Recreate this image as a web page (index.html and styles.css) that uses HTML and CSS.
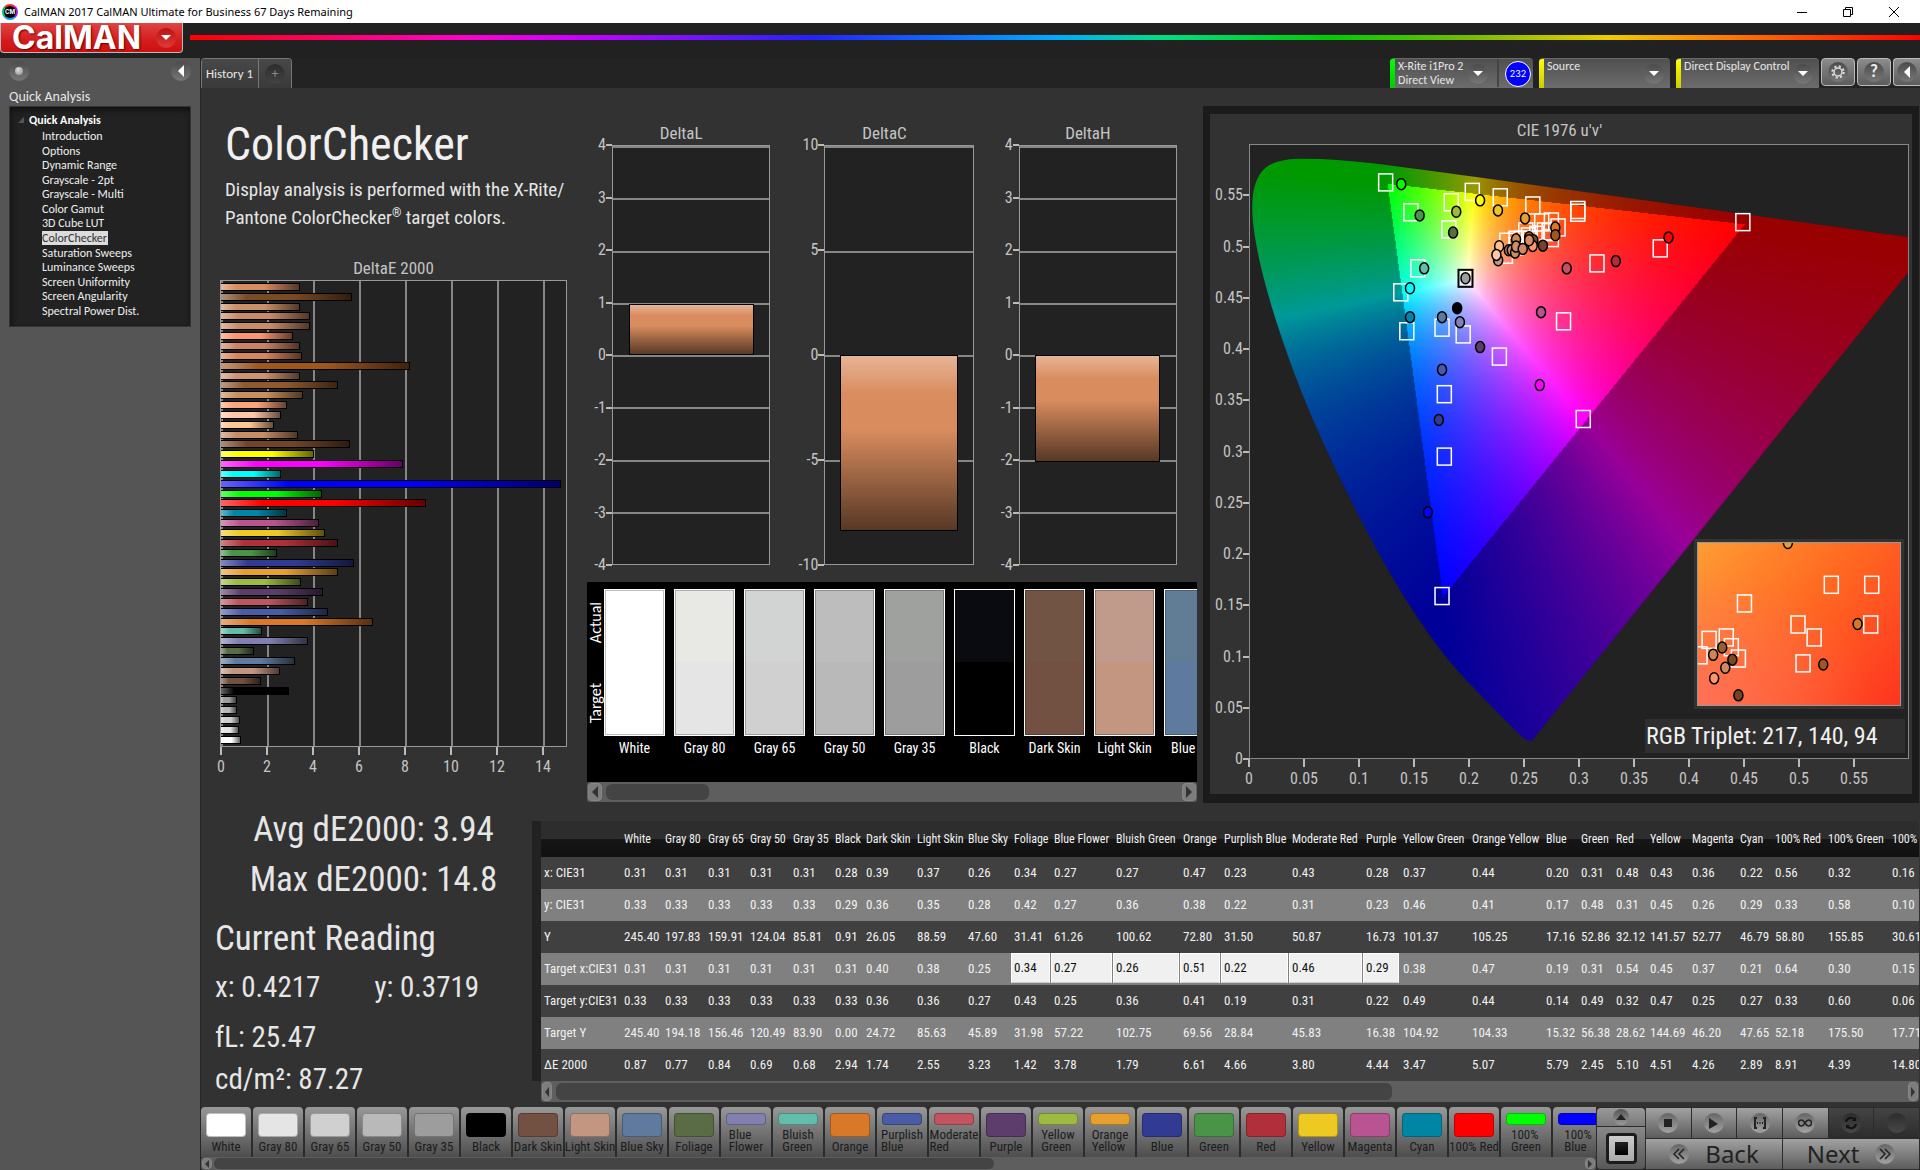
FILE: index.html
```html
<!DOCTYPE html>
<html lang="en">
<head>
<meta charset="utf-8">
<title>CalMAN 2017 CalMAN Ultimate for Business 67 Days Remaining</title>
<link rel="stylesheet" href="styles.css">
</head>
<body>
<header class="titlebar">
  <span class="app-icon">CM</span>
  <span class="app-title">CalMAN 2017 CalMAN Ultimate for Business 67 Days Remaining</span>
  <div class="window-buttons">
    <button aria-label="Minimize"><svg width="12" height="12"><path d="M1 6.5h10" stroke="#000"/></svg></button>
    <button aria-label="Restore"><svg width="12" height="12" fill="none" stroke="#000"><path d="M1.5 3.5h7v7h-7zM3.500 3.500v-2h7v7h-2"/></svg></button>
    <button aria-label="Close"><svg width="12" height="12" stroke="#000"><path d="M1 1l10 10M11 1L1 11"/></svg></button>
  </div>
</header>
<div class="brandbar">
  <button class="logo"><span>CalMAN</span><i class="round round-red"><svg width="10" height="6"><path d="M0 0h10L5 5z" fill="#fff"/></svg></i></button>
  <div class="rainbow"></div>
</div>
<div class="body">
  <aside class="sidebar">
    <div class="side-tools">
      <button class="round" aria-label="Status"><i class="bead"></i></button>
      <button class="round" aria-label="Collapse"><svg width="6" height="12"><path d="M6 0v12L0 6z" fill="#fff"/></svg></button>
    </div>
    <h2>Quick Analysis</h2>
    <nav class="tree">
      <strong><svg width="6" height="6"><path d="M6 0v6H0z" fill="#555"/></svg>Quick Analysis</strong>
      <ul id="tree"></ul>
    </nav>
  </aside>
  <main>
    <div class="toolbar">
      <div class="tabs">
        <button class="tab">History 1</button>
        <button class="tab add" aria-label="Add tab"><i class="round dark">+</i></button>
      </div>
      <div class="devices">
        <button class="device meter"><i class="stripe green"></i><span>X-Rite i1Pro 2<br>Direct View</span><i class="round arrow"><svg width="10" height="6"><path d="M0 0h10L5 5z" fill="#fff"/></svg></i><i class="divider"></i><b class="count">232</b></button>
        <button class="device source"><i class="stripe"></i><span>Source</span><i class="round arrow"><svg width="10" height="6"><path d="M0 0h10L5 5z" fill="#fff"/></svg></i></button>
        <button class="device display"><i class="stripe"></i><span>Direct Display Control</span><i class="round arrow"><svg width="10" height="6"><path d="M0 0h10L5 5z" fill="#fff"/></svg></i></button>
        <div class="tools">
          <button class="tool" aria-label="Settings"><i class="round"><svg width="14" height="14" viewBox="-7 -7 14 14" fill="none" stroke="#ddd"><circle r="4" stroke-width="1.500"/><circle r="5.700" stroke-width="2" stroke-dasharray="2.200 2.280"/></svg></i></button>
          <button class="tool" aria-label="Help"><i class="round q">?</i></button>
          <button class="tool" aria-label="Collapse"><i class="round"><svg width="6" height="12"><path d="M6 0v12L0 6z" fill="#fff"/></svg></i></button>
        </div>
      </div>
    </div>

    <div class="upper">
      <section class="intro">
        <h1>ColorChecker</h1>
        <p>Display analysis is performed with the X-Rite/<br>Pantone ColorChecker<sup>®</sup> target colors.</p>
        <h3>DeltaE 2000</h3>
        <div class="de-plot" id="de-plot"></div>
        <div class="de-axis"><span>0</span><span>2</span><span>4</span><span>6</span><span>8</span><span>10</span><span>12</span><span>14</span></div>
      </section>

      <section class="middle">
        <div class="deltas" id="deltas"></div>
        <div class="patches">
          <div class="patch-view">
            <div class="patch-side"><span>Actual</span><span>Target</span></div>
            <div class="patch-row" id="patches"></div>
          </div>
          <div class="scroll"><button aria-label="Left"><svg width="6" height="12"><path d="M6 0v12L0 6z"/></svg></button><div class="track"><i style="width:18%"></i></div><button aria-label="Right"><svg width="6" height="12"><path d="M0 0v12l6-6z"/></svg></button></div>
        </div>
      </section>

      <section class="cie">
        <div class="cie-panel">
          <h3>CIE 1976 u'v'</h3>
          <div class="cie-y" id="cie-y"></div>
          <div class="cie-plot">
            <canvas id="gamut" width="659" height="614"></canvas>
            <svg class="markers" id="markers"></svg>
            <div class="inset"><svg id="inset"></svg></div>
            <div class="triplet">RGB Triplet: 217, 140, 94</div>
          </div>
          <div class="cie-x" id="cie-x"></div>
        </div>
      </section>
    </div>

    <div class="lower">
      <section class="stats">
        <p class="big">Avg dE2000: 3.94</p>
        <p class="big">Max dE2000: 14.8</p>
        <h3>Current Reading</h3>
        <p class="pair"><span>x: 0.4217</span><span>y: 0.3719</span></p>
        <p class="row-fl">fL: 25.47</p>
        <p>cd/m²: 87.27</p>
      </section>
      <section class="data">
        <div class="table-wrap"><table id="table"></table></div>
        <div class="scroll tight"><button aria-label="Left"><svg width="4" height="10"><path d="M4 0v10L0 5z"/></svg></button><div class="track"><i style="width:62%"></i></div><button aria-label="Right"><svg width="4" height="10"><path d="M0 0v10l4-5z"/></svg></button></div>
      </section>
    </div>

    <footer>
      <div class="swatches">
        <div class="swatch-row" id="swatches"></div>
        <div class="scroll thin"><button aria-label="Left"><svg width="4" height="8"><path d="M4 0v8L0 4z"/></svg></button><div class="track"><i style="width:57%"></i></div><button aria-label="Right"><svg width="4" height="8"><path d="M0 0v8l4-4z"/></svg></button></div>
      </div>
      <div class="stopper">
        <button class="up" aria-label="Expand"><i class="round"><svg width="10" height="6"><path d="M0 6h10L5 0z" fill="#222"/></svg></i></button>
        <button class="stop" aria-label="Pattern"><i></i></button>
      </div>
      <div class="transport">
        <button aria-label="Stop"><i class="round"><svg width="8" height="8"><path d="M0 0h8v8H0z" fill="#222"/></svg></i></button>
        <button aria-label="Play"><i class="round"><svg width="9" height="11"><path d="M0 0v11l9-5z" fill="#222"/></svg></i></button>
        <button aria-label="Read series"><i class="round"><svg width="14" height="12" fill="none" stroke="#222" stroke-width="2"><path d="M4 1H2v10h2M10 1h2v10h-2"/><path d="M4 6h1M6.500 6h1M9 6h1"/></svg></i></button>
        <button aria-label="Continuous"><i class="round"><svg width="14" height="8" fill="none" stroke="#222" stroke-width="1.500"><path d="M7 4C5.500 1.500 4.500 1 3.500 1a3 3 0 0 0 0 6C4.500 7 5.500 6.500 7 4s2.500-3 3.500-3a3 3 0 0 1 0 6C9.500 7 8.500 6.500 7 4z"/></svg></i></button>
        <button class="off" aria-label="Refresh"><i class="round"><svg width="14" height="14" fill="none" stroke="#111" stroke-width="2"><path d="M2 6a5 5 0 0 1 9-2M12 8a5 5 0 0 1-9 2"/><path d="M12 1v4H8zM2 13V9h4z" fill="#111" stroke="none"/></svg></i></button>
        <button class="off" aria-label="Record"><i class="round"></i></button>
        <button class="nav back"><i class="round"><svg width="12" height="12" fill="none" stroke="#222" stroke-width="1.500"><path d="M6 1L1 6l5 5M11 1L6 6l5 5"/></svg></i>Back</button>
        <button class="nav next">Next<i class="round"><svg width="12" height="12" fill="none" stroke="#222" stroke-width="1.500"><path d="M6 1l5 5-5 5M1 1l5 5-5 5"/></svg></i></button>
      </div>
    </footer>
  </main>
</div>
<script src="app.js"></script>
</body>
</html>
```
FILE: styles.css
```css
:root {
  --ui: Carlito, Lato, sans-serif;
  --narrow: "Roboto Condensed", Carlito, Lato, sans-serif;
}
* { box-sizing: border-box; }
body {
  margin: 0; min-height: 100vh; display: flex; flex-direction: column;
  background: #222; color: #e6e6e6; font: 12px/14px var(--ui); overflow-x: hidden;
}
h1, h2, h3, p, ul { margin: 0; padding: 0; font-weight: 400; }
ul { list-style: none; }
button { border: 0; padding: 0; margin: 0; background: none; color: inherit; font: inherit; }
i { font-style: normal; }
svg { display: block; }

/* window title */
.titlebar { display: flex; align-items: center; height: 23px; background: #fff; color: #000; font: 11px/16px "Noto Sans", sans-serif; }
.app-icon {
  width: 16px; height: 16px; margin: 0 6px 0 2px; border-radius: 50%;
  border: 2px solid #0a8; border-color: #e33 #92e #19e #1b5;
  background: #000; color: #fff; font: 700 6px/12px Inter, sans-serif; text-align: center;
}
.window-buttons { margin-left: auto; display: flex; }
.window-buttons button { width: 46px; height: 22px; display: grid; place-items: center; }
.window-buttons button:last-child { width: 49px; padding-right: 3px; }

.brandbar { display: flex; align-items: flex-start; height: 35px; background: #212121; }
.logo {
  flex: none; width: 183px; height: 30px; padding: 0 6px 0 11px; display: flex; align-items: center; justify-content: space-between;
  border: 1px solid #bbb; border-top: 0; border-radius: 0 0 4px 4px;
  background: linear-gradient(#e04545, #d51c1c 60%, #cc1010); color: #fff;
  font: 700 32px/29px Inter, sans-serif; text-shadow: 1px 1px 2px #600;
}
.rainbow { flex: 1; height: 5px; margin: 12px 0 0 7px; background: linear-gradient(to right, #f00, #f0c 16%, #c0f 22%, #22f 36%, #0af 50%, #0d8 56%, #0c0 66%, #7b0 74%, #ec0 82%, #f70 89%, #f00); }

.round {
  flex: none; width: 20px; height: 20px; border-radius: 50%; display: inline-grid; place-items: center;
  background: linear-gradient(#4b4b4b, #777);
}
.round-red { background: linear-gradient(#b81313, #e03a3a); }

.body { flex: 1; display: flex; }
.sidebar { flex: none; width: 200px; padding: 3px 9px 0; background: #555; }
.side-tools { display: flex; justify-content: space-between; }
.bead { width: 8px; height: 8px; border-radius: 50%; background: radial-gradient(at 40% 30%, #ddd, #888); }
.sidebar h2 { margin-top: 7px; font-size: 14px; line-height: 18px; }
.tree { height: 221px; padding: 6px 0 6px 20px; background: #222; border: 1px solid #333; box-shadow: inset 1px 3px 6px #111; }
.tree strong { display: flex; align-items: center; gap: 5px; margin-left: -12px; line-height: 14px; color: #fff; }
.tree ul { height: 189px; margin-top: 2px; padding-left: 12px; display: flex; flex-direction: column; justify-content: space-between; align-items: flex-start; }
.tree a { color: #eee; text-decoration: none; display: block; line-height: 14px; padding: 0 1px 0 0; }
.tree a.on { background: #dcdcdc; color: #333; }

main { flex: 1; min-width: 0; display: flex; flex-direction: column; border-left: 1px solid #262626; background: #323232; }
.toolbar { display: flex; justify-content: space-between; height: 30px; background: #232323; }
.tabs { display: flex; border: 1px solid #777; border-bottom: 0; border-radius: 4px 4px 0 0; overflow: hidden; }
.tab { padding: 0 5px 0 4px; width: 57px; background: linear-gradient(#484848, #3a3a3a); font-size: 13px; border-right: 1px solid #777; white-space: nowrap; }
.tab.add { width: 32px; padding: 0; border: 0; }
.round.dark { background: linear-gradient(#2c2c2c, #444); color: #888; font-size: 14px; }
.devices { display: flex; gap: 6px; align-items: flex-start; }
.device {
  display: flex; align-items: flex-start; height: 30px; text-align: left;
  border-radius: 4px 4px 0 0; border-top: 1px solid #6a6a6a; background: linear-gradient(#505050, #6c6c6c);
}
.device.meter { width: 143px; }
.device.source { width: 131px; }
.device.display { width: 143px; }
.device span { flex: 1; white-space: nowrap; padding-left: 3px; }
.stripe { width: 5px; height: 29px; background: linear-gradient(#ff0, #cc0); border-radius: 3px 0 0 0; }
.stripe.green { background: linear-gradient(#0f0, #0c0); }
.arrow { margin: 5px 6px 0 0; }
.divider { width: 2px; height: 28px; background: #444; margin: 0 6px 0 3px; }
.count { width: 26px; height: 26px; margin: 2px 2px 0 0; border-radius: 50%; border: 1px solid #fff; background: #00f; color: #fff; font: 9px/24px Inter, sans-serif; text-align: center; }
.tools { display: flex; gap: 2px; margin-left: -4px; }
.tool { width: 34px; height: 28px; border: 1px solid #bbb; border-radius: 4px; background: linear-gradient(#8c8c8c, #5c5c5c); display: grid; place-items: center; }
.tool:last-child { width: 27px; border-right: 0; border-radius: 4px 0 0 4px; }
.round.q { font: 700 17px/20px var(--ui); color: #eee; }

/* charts */
.upper { flex: 1 0 715px; display: grid; grid-template-columns: minmax(0, 386fr) minmax(0, 610fr) minmax(0, 723fr); font-family: var(--narrow); }
.upper h3 { font-size: 17px; line-height: 22px; text-align: center; color: #c4c4c4; }
.intro { display: flex; flex-direction: column; padding: 28px 20px 26px 19px; }
.intro h1 { font-size: 46px; line-height: 56px; color: #f0f0f0; padding-left: 5px; }
.intro p { font-size: 19px; line-height: 28px; padding: 4px 0 24px 5px; white-space: nowrap; }
.intro sup { font-size: 12px; line-height: 0; }
.intro p + h3 { line-height: 24px; }
.de-plot {
  flex: 1; display: flex; flex-direction: column; border: 1px solid #999; padding: 1px 0;
  background: repeating-linear-gradient(to right, #868686 0 2px, transparent 2px 13.333%) #222;
}
.de-row { flex: 1; display: flex; align-items: center; }
.bar { height: 8px; border: 1px solid #000; border-left: 0; background-image: linear-gradient(to right, rgba(255,255,255,.4), transparent 20%, transparent 55%, rgba(0,0,0,.6)); }
.de-axis { display: grid; grid-template-columns: repeat(7, 2fr) 1fr; padding: 0 1px; font-size: 16px; line-height: 20px; color: #c4c4c4; }
.de-axis span, .cie-x span { width: 0; display: flex; flex-direction: column; align-items: center; }
.de-axis span::before, .cie-x span::before { content: ""; width: 2px; height: 8px; margin-bottom: 2px; background: #bbb; }

.middle { display: flex; flex-direction: column; }
.deltas { flex: 1; display: grid; grid-template-columns: repeat(3, 1fr); padding: 34px 0 17px; }
.delta { display: grid; grid-template: 23px 1fr / auto 1fr; padding: 0 20px 0 5px; }
.delta h3 { grid-column: 1 / 3; }
.delta-axis { width: 20px; display: flex; flex-direction: column; justify-content: space-between; font-size: 16px; color: #c4c4c4; }
.delta-axis.wide { width: 29px; }
.delta-axis span, .cie-y span { height: 0; display: flex; align-items: center; justify-content: flex-end; white-space: nowrap; }
.delta-axis span::after, .cie-y span::after { content: ""; width: 6px; height: 2px; flex: none; background: #bbb; }
.delta-plot { position: relative; border: 1px solid #999; background-color: #222; }
.delta-plot .block { position: absolute; left: 10%; right: 10%; border: 1px solid #000; background: linear-gradient(rgba(255,255,255,.35), transparent 22%, transparent 42%, rgba(0,0,0,.6)) #d98c5e; }
.eighths { background-image: repeating-linear-gradient(#868686 0 2px, transparent 2px 12.5%); }
.quarters { background-image: repeating-linear-gradient(#868686 0 2px, transparent 2px 25%); }

.patches { margin-bottom: 1px; }
.patch-view { display: flex; height: 200px; background: #000; overflow: hidden; }
.patch-side { flex: none; width: 17px; height: 161px; display: flex; flex-direction: column; justify-content: space-around; align-items: center; color: #fff; font: 16px/17px var(--ui); }
.patch-side span { writing-mode: vertical-rl; rotate: 180deg; }
.patch-row { display: flex; gap: 9px; padding-top: 7px; min-width: 0; }
.patch { flex: none; width: 61px; text-align: center; font-size: 14px; line-height: 24px; color: #fff; white-space: nowrap; }
.patch div { height: 147px; border: 1px solid #fff; outline: 1px solid rgba(0,0,0,.25); outline-offset: -2px; }
.scroll { display: flex; align-items: center; height: 20px; padding: 1px; background: #5e5e5e; border-radius: 3px; }
.scroll button { flex: none; width: 14px; height: 100%; display: grid; place-items: center; border: 1px solid #888; border-radius: 4px; background: #7c7c7c; }
.scroll button svg { fill: #333; }
.track { flex: 1; height: 100%; padding: 1px 4px; }
.track i { display: block; height: 100%; border-radius: 6px; background: #444; }
.scroll.tight { height: 21px; margin-left: 9px; }
.scroll.tight button, .scroll.thin button { width: 10px; }
.scroll.thin { height: 13px; }
.scroll.thin .track { padding: 0 2px; }

.cie { padding: 18px 1px 0 6px; display: flex; }
.cie-panel { flex: 1; min-width: 0; display: grid; grid-template: 30px 1fr 35px / 39px 1fr; padding-right: 3px; border: 7px solid #1b1b1b; border-top-width: 8px; border-bottom-width: 9px; }
.cie-panel h3 { grid-column: 1 / 3; line-height: 32px; }
.cie-y { display: grid; grid-template-rows: repeat(12, 1fr); align-items: end; font-size: 16px; color: #c4c4c4; }
.cie-plot { position: relative; border: 1px solid #888; background: #222; }
.cie-plot canvas, .markers { position: absolute; inset: 0; width: 100%; height: 100%; }
.markers, .inset svg { overflow: hidden; }
.cie-x { grid-column: 2; display: grid; grid-template-columns: repeat(12, 1fr); font-size: 16px; line-height: 20px; color: #c4c4c4; }
.target { fill: none; stroke: #fff; stroke-width: 1.5; }
.target.now { stroke: #000; stroke-width: 2; }
.reading { stroke: #000; stroke-width: 1.5; }
.inset { position: absolute; right: 4px; bottom: 49px; width: 210px; height: 170px; padding: 3px; background: #333; }
.inset svg { width: 100%; height: 100%; border: 1px solid #999; background: radial-gradient(at 0 100%, rgba(255,112,100,.8), transparent 60%), linear-gradient(130deg, #ff9c34, #ff6c22 45%, #ff3420); }
.triplet { position: absolute; right: 3px; bottom: 5px; width: 260px; padding-left: 1px; background: #2f2f2f; font-size: 24px; line-height: 34px; color: #f0f0f0; }

.lower { display: grid; grid-template-columns: 331px minmax(0, 1fr); padding: 18px 1px 5px 0; }
.stats { padding: 0 0 0 14px; height: 281px; font: 29px/36px var(--narrow); white-space: nowrap; }
.stats .big { font-size: 35px; line-height: 50px; text-align: center; }
.stats .big:first-child { margin-top: -16px; }
.stats h3 { font-size: 35px; line-height: 40px; margin-top: 14px; }
.stats .pair { display: flex; gap: 54px; margin-top: 10px; }
.stats .row-fl { margin: 14px 0 6px; }
.table-wrap { overflow: hidden; border-left: 9px solid #222; }
table { width: 1410px; table-layout: fixed; border-collapse: collapse; font: 13px/16px var(--narrow); }
th, td { height: 32px; padding: 0 3px; text-align: left; font-weight: 400; white-space: nowrap; color: #f0f0f0; }
thead th { height: 36px; font-size: 12px; background: linear-gradient(#2d2d2d 50%, #161616 51%, #101010); }
tbody tr { background: #404040; }
tbody tr:nth-child(even) { background: #808080; }
td.hot { padding: 0 1px 2px 0; }
td.hot span { display: block; height: 30px; padding: 6px 2px 0; background: #f0f0f0; border: 1px solid #fff; border-bottom-color: #ccc; color: #111; }

/* pattern swatches and transport */
footer { display: flex; gap: 1px; height: 63px; background: #2c2c2c; }
.swatches { flex: 1; min-width: 0; }
.swatch-row { display: flex; gap: 2px; height: 50px; overflow: hidden; }
.swatch { flex: none; width: 50px; height: 50px; padding-top: 6px; display: flex; flex-direction: column; align-items: center; border-radius: 4px 4px 0 0; background: linear-gradient(#989898, #4e4e4e); color: #1c1c1c; font: 13px/12px var(--narrow); white-space: nowrap; text-align: left; }
.swatch i { width: 40px; height: 24px; margin-bottom: 4px; border-radius: 4px; border: 1px solid rgba(0,0,0,.25); }
.swatch.two i { height: 12px; }
.stopper { flex: none; width: 48px; display: flex; flex-direction: column; gap: 1px; padding: 1px 0; }
.stopper button { width: 48px; display: grid; place-items: center; background: linear-gradient(#999, #7a7a7a); border-radius: 4px 4px 0 0; }
.up { height: 18px; }
.up .round { width: 16px; height: 16px; background: linear-gradient(#555, #999); }
.stop { flex: 1; }
.stopper .stop { background: linear-gradient(#888, #585858); border-radius: 0 0 4px 4px; }
.stop i { width: 31px; height: 31px; border: 3px solid #1c1c1c; border-radius: 4px; background: linear-gradient(#222, #000) center / 13px 13px no-repeat, linear-gradient(#ccc, #aaa); }
.transport { flex: none; width: 274px; padding: 1px 1px 1px 0; display: grid; grid-template: 30px 30px / repeat(6, 1fr); gap: 1px; }
.transport button { display: flex; align-items: center; justify-content: center; background: linear-gradient(#a2a2a2, #5c5c5c); }
.transport .round { background: linear-gradient(#666, #a2a2a2); }
.transport .off { background: linear-gradient(#444, #2c2c2c); }
.transport .off .round { background: linear-gradient(#2c2c2c, #484848); }
.transport .nav { grid-column: span 3; gap: 16px; color: #222; font: 24px/28px "Noto Sans", sans-serif; }
```
FILE: app.js
```js
const el = (tag, cls, text) => {
  const n = document.createElement(tag);
  if (cls) n.className = cls;
  if (text !== undefined) n.textContent = text;
  return n;
};
const svg = (tag, attrs) => {
  const n = document.createElementNS('http://www.w3.org/2000/svg', tag);
  for (const k in attrs) n.setAttribute(k, attrs[k]);
  return n;
};
const $ = id => document.getElementById(id);

// workflow pages
for (const name of ['Introduction', 'Options', 'Dynamic Range', 'Grayscale - 2pt', 'Grayscale - Multi', 'Color Gamut', '3D Cube LUT', 'ColorChecker', 'Saturation Sweeps', 'Luminance Sweeps', 'Screen Uniformity', 'Screen Angularity', 'Spectral Power Dist.']) {
  const li = el('li'), a = el('a', name === 'ColorChecker' ? 'on' : '', name);
  a.href = '#';
  li.append(a);
  $('tree').append(li);
}

// name, colour, column width, x, y, Y, target x, target y, target Y, dE2000
const colors = [
  ['White', '#ffffff', 41, '0.31', '0.33', '245.40', '0.31', '0.33', '245.40', '0.87'],
  ['Gray 80', '#e5e5e5', 43, '0.31', '0.33', '197.83', '0.31', '0.33', '194.18', '0.77'],
  ['Gray 65', '#d0d0d0', 42, '0.31', '0.33', '159.91', '0.31', '0.33', '156.46', '0.84'],
  ['Gray 50', '#b9b9b9', 43, '0.31', '0.33', '124.04', '0.31', '0.33', '120.49', '0.69'],
  ['Gray 35', '#9d9d9d', 42, '0.31', '0.33', '85.81', '0.31', '0.33', '83.90', '0.68'],
  ['Black', '#000000', 31, '0.28', '0.29', '0.91', '0.31', '0.33', '0.00', '2.94'],
  ['Dark Skin', '#735142', 51, '0.39', '0.36', '26.05', '0.40', '0.36', '24.72', '1.74'],
  ['Light Skin', '#c39682', 51, '0.37', '0.35', '88.59', '0.38', '0.36', '85.63', '2.55'],
  ['Blue Sky', '#5e7a9e', 46, '0.26', '0.28', '47.60', '0.25', '0.27', '45.89', '3.23'],
  ['Foliage', '#596c43', 40, '0.34', '0.42', '31.41', '0.34', '0.43', '31.98', '1.42'],
  ['Blue Flower', '#8280b0', 62, '0.27', '0.27', '61.26', '0.27', '0.25', '57.22', '3.78'],
  ['Bluish Green', '#64bdaa', 67, '0.27', '0.36', '100.62', '0.26', '0.36', '102.75', '1.79'],
  ['Orange', '#d97829', 41, '0.47', '0.38', '72.80', '0.51', '0.41', '69.56', '6.61'],
  ['Purplish Blue', '#4a5ca5', 68, '0.23', '0.22', '31.50', '0.22', '0.19', '28.84', '4.66'],
  ['Moderate Red', '#c25460', 74, '0.43', '0.31', '50.87', '0.46', '0.31', '45.83', '3.80'],
  ['Purple', '#5d3d6b', 37, '0.28', '0.23', '16.73', '0.29', '0.22', '16.38', '4.44'],
  ['Yellow Green', '#9eba41', 69, '0.37', '0.46', '101.37', '0.38', '0.49', '104.92', '3.47'],
  ['Orange Yellow', '#e6a02e', 74, '0.44', '0.41', '105.25', '0.47', '0.44', '104.33', '5.07'],
  ['Blue', '#323b94', 35, '0.20', '0.17', '17.16', '0.19', '0.14', '15.32', '5.79'],
  ['Green', '#4a9448', 35, '0.31', '0.48', '52.86', '0.31', '0.49', '56.38', '2.45'],
  ['Red', '#b02f38', 34, '0.48', '0.31', '32.12', '0.54', '0.32', '28.62', '5.10'],
  ['Yellow', '#edc922', 42, '0.43', '0.45', '141.57', '0.45', '0.47', '144.69', '4.51'],
  ['Magenta', '#ba5391', 48, '0.36', '0.26', '52.77', '0.37', '0.25', '46.20', '4.26'],
  ['Cyan', '#0086a5', 35, '0.22', '0.29', '46.79', '0.21', '0.27', '47.65', '2.89'],
  ['100% Red', '#ff0000', 53, '0.56', '0.33', '58.80', '0.64', '0.33', '52.18', '8.91'],
  ['100% Green', '#00ff00', 64, '0.32', '0.58', '155.85', '0.30', '0.60', '175.50', '4.39'],
  ['100% Blue', '#0000ff', 72, '0.16', '0.10', '30.61', '0.15', '0.06', '17.71', '14.80'],
];

// dE2000 bars, drawn from the last measured colour down to white
const extra = [[2.6, '#00ffff'], [7.9, '#ff00ff'], [4.05, '#ffff00'], [5.6, '#734528'], [3.35, '#c98d66'], [2.3, '#ffc690'], [2.6, '#ffc7a8'], [2.85, '#ffa57a'], [3.55, '#c88f5c'], [5.1, '#8f5a30'], [3.45, '#cf9272'], [8.2, '#a0561f'], [3.5, '#d8845c'], [3.45, '#cd8266'], [3.15, '#ff966f'], [3.85, '#c98c66'], [3.85, '#c98a68'], [3.45, '#cc9068'], [5.7, '#7a4a24'], [3.45, '#d98c5e']];
const bars = colors.map(c => [+c[9], c[1]]).concat(extra).reverse();
for (const [value, color] of bars) {
  const row = el('div', 'de-row'), bar = el('div', 'bar');
  bar.style.width = value / 15 * 100 + '%';
  bar.style.backgroundColor = color;
  row.append(bar);
  $('de-plot').append(row);
}

// DeltaL / DeltaC / DeltaH
for (const [name, max, step, value] of [['DeltaL', 4, 1, .97], ['DeltaC', 10, 5, -8.4], ['DeltaH', 4, 1, -2.04]]) {
  const box = el('div', 'delta'), axis = el('div', 'delta-axis' + (max === 10 ? ' wide' : ''));
  for (let v = max; v >= -max; v -= step) axis.append(el('span', '', v));
  const plot = el('div', 'delta-plot ' + (step === 1 ? 'eighths' : 'quarters')), block = el('div', 'block');
  block.style.top = (max - Math.max(value, 0)) / max * 50 + '%';
  block.style.height = Math.abs(value) / max * 50 + '%';
  plot.append(block);
  box.append(el('h3', '', name), axis, plot);
  $('deltas').append(box);
}

// actual / target patches
const actual = ['#ffffff', '#e8e8e5', '#d1d4d2', '#bdbdbd', '#9fa19f', '#0a0b10', '#725445', '#c09a8b', '#617d96'];
actual.forEach((color, i) => {
  const p = el('div', 'patch'), d = el('div');
  d.style.background = `linear-gradient(${color} 50%, ${colors[i][1]} 50%)`;
  p.append(d, colors[i][0]);
  $('patches').append(p);
});

// results table
const group = el('colgroup'), label = el('col');
label.style.width = '80px';
group.append(label);
const head = el('tr');
head.append(el('th', '', ''));
for (const c of colors) {
  const col = el('col'), th = el('th', '', c[0]);
  col.style.width = c[2] + 'px';
  group.append(col);
  th.scope = 'col';
  head.append(th);
}
const thead = el('thead'), tbody = el('tbody');
thead.append(head);
['x: CIE31', 'y: CIE31', 'Y', 'Target x:CIE31', 'Target y:CIE31', 'Target Y', 'ΔE 2000'].forEach((name, r) => {
  const tr = el('tr'), th = el('th', '', name);
  th.scope = 'row';
  tr.append(th);
  colors.forEach((c, i) => {
    const hot = r === 3 && i >= 9 && i <= 15, td = el('td', hot ? 'hot' : '', hot ? undefined : c[r + 3]);
    if (hot) td.append(el('span', '', c[6]));
    tr.append(td);
  });
  tbody.append(tr);
});
$('table').append(group, thead, tbody);

// pattern buttons
const twoLine = ['Blue Flower', 'Bluish Green', 'Purplish Blue', 'Moderate Red', 'Yellow Green', 'Orange Yellow', '100% Green', '100% Blue'];
for (const c of colors) {
  const two = twoLine.includes(c[0]), b = el('button', 'swatch' + (two ? ' two' : '')), chip = el('i'), text = el('span');
  chip.style.background = c[1];
  if (two) {
    const [a, z] = c[0].split(' ');
    text.append(a, el('br'), z);
  } else text.textContent = c[0];
  b.append(chip, text);
  $('swatches').append(b);
}

// CIE 1976 chart, both axes run from 0 to 0.6
const RANGE = .6;
for (let i = 11; i >= 0; i--) $('cie-y').append(el('span', '', +(i * .05).toFixed(2)));
for (let i = 0; i < 12; i++) $('cie-x').append(el('span', '', +(i * .05).toFixed(2)));

const locus = [[.2568, .0166], [.2522, .0169], [.2461, .0226], [.2347, .035], [.2161, .0549], [.1877, .0871], [.169, .1119], [.1441, .151], [.1147, .2044], [.0828, .2708], [.0521, .3427], [.0282, .4117], [.0119, .4698], [.0035, .5131], [.0014, .5432], [.0046, .5638], [.0123, .577], [.0231, .5837], [.036, .5861], [.0501, .5868], [.0792, .5856], [.1127, .5821], [.1531, .5766], [.2026, .5694], [.2623, .5604], [.3315, .5501], [.4035, .5393], [.4692, .5296], [.5203, .5219], [.583, .5125], [.6234, .5065]];
const canvas = $('gamut'), W = canvas.width, H = canvas.height;
const source = document.createElement('canvas');
source.width = W;
source.height = H;
const sctx = source.getContext('2d'), img = sctx.createImageData(W, H);
for (let j = 0; j < H; j++) for (let i = 0; i < W; i++) {
  const u = i / W * RANGE, v = (H - j) / H * RANGE, d = 6 * u - 16 * v + 12;
  const x = 9 * u / d, y = 4 * v / d, z = 1 - x - y;
  const rgb = [3.2406 * x - 1.5372 * y - .4986 * z, -.9689 * x + 1.8758 * y + .0415 * z, .0557 * x - .204 * y + 1.057 * z];
  const top = Math.max(...rgb), dim = Math.min(...rgb) < 0 ? .6 : 1, o = (j * W + i) * 4;
  rgb.forEach((c, k) => { img.data[o + k] = 255 * dim * Math.max(0, c / top); });
  img.data[o + 3] = 255;
}
sctx.putImageData(img, 0, 0);
const ctx = canvas.getContext('2d');
const pts = locus.map(([u, v]) => [u / RANGE * W, H - v / RANGE * H]);
ctx.beginPath();
ctx.moveTo(...pts[0]);
for (let i = 1; i < pts.length - 1; i++) {
  const [x, y] = pts[i], [nx, ny] = pts[i + 1];
  ctx.quadraticCurveTo(x, y, (x + nx) / 2, (y + ny) / 2);
}
ctx.lineTo(...pts[pts.length - 1]);
ctx.closePath();
ctx.clip();
ctx.drawImage(source, 0, 0);

const targets = [[.1237, .5639], [.1467, .5347], [.1835, .5444], [.1814, .5179], [.2027, .5546], [.2282, .5493], [.2579, .5413], [.2989, .5369], [.2989, .5342], [.4494, .525], [.3741, .4993], [.3164, .4846], [.153, .4798], [.1375, .4563], [.143, .4182], [.1751, .4217], [.1944, .4151], [.2274, .3934], [.2859, .4279], [.1772, .3566], [.1772, .2955], [.3039, .3323], [.1751, .159],
  [.2342, .5058], [.2329, .4931], [.266, .5247], [.2748, .5256], [.2809, .5198], [.2748, .5094], [.2684, .5159], [.2727, .5152], [.2515, .5159], [.2539, .511], [.2478, .5077], [.2426, .5077], [.2554, .5077], [.2426, .5012], [.2615, .5126]];
const readings = [[.1379, .5617, '#0f0'], [.1547, .5311, '#4a9548'], [.1881, .5347, '#9ebb3f'], [.1852, .5143, '#596d42'], [.2098, .5458, '#ff0'], [.2261, .536, '#edc720'], [.2508, .5281, '#e69e2c'], [.2784, .5192, '#d97729'], [.2784, .5117, '#a0561f'], [.2671, .5015, '#734528'], [.3816, .5095, '#f00'], [.3336, .4864, '#b02e38'], [.2888, .4793, '#c2525f'], [.1588, .4793, '#61bfaa'], [.1459, .4598, '#0ff'], [.1965, .4696, '#9e9e9e'], [.1889, .4403, '#000'], [.1459, .4315, '#0085a6'], [.1751, .4315, '#5c7a9f'], [.1914, .4266, '#8480b1'], [.2654, .4364, '#b9508f'], [.2098, .4022, '#5b3c69'], [.1751, .3801, '#4a5ba5'], [.2642, .365, '#f0f'], [.1722, .3309, '#313a95'], [.1622, .2405, '#00f'],
  [.2272, .5009, '#ffc08c'], [.2263, .4872, '#c39782'], [.2247, .4924, '#ffc7a8'], [.236, .497, '#a97b55'], [.2387, .497, '#c98d66'], [.2417, .4947, '#c88a63'], [.2426, .5077, '#cc8a52'], [.2426, .5006, '#cf8c6a'], [.2487, .4983, '#d08a68'], [.2545, .5097, '#94602f'], [.2584, .5068, '#7a4a24'], [.2578, .5012, '#ff966f'], [.2545, .5068, '#d98c5e']];
const square = (x, y, cls) => svg('rect', { x, y, width: 14, height: 17, transform: 'translate(-7 -8)', class: cls });
const dot = (cx, cy, fill) => svg('ellipse', { cx, cy, rx: 4.5, ry: 5.5, fill, class: 'reading' });
const px = u => u / RANGE * 100 + '%', py = v => (1 - v / RANGE) * 100 + '%';
for (const [u, v] of targets) $('markers').append(square(px(u), py(v), 'target'));
$('markers').append(square(px(.1965), py(.47), 'target now'));
for (const [u, v, c] of readings) $('markers').append(dot(px(u), py(v), c));

// magnified view, positions in percent of its box
for (const [x, y] of [[66, 25.5], [86, 25.5], [23, 37], [49.5, 50], [85.5, 50], [57.5, 58], [5.5, 59.5], [14, 58], [16.5, 64], [20, 71], [1, 69], [52, 74]]) $('inset').append(square(x + '%', y + '%', 'target'));
for (const [x, y, c] of [[44.5, 0, '#e69e2c'], [79, 50, '#d97729'], [62, 75, '#a0561f'], [12, 64.5, '#94602f'], [7.5, 69, '#cc8a52'], [17, 72, '#7a4a24'], [13.5, 77, '#d08a5e'], [8, 83.5, '#ff966f'], [20, 94, '#734528']]) $('inset').append(dot(x + '%', y + '%', c));
```
